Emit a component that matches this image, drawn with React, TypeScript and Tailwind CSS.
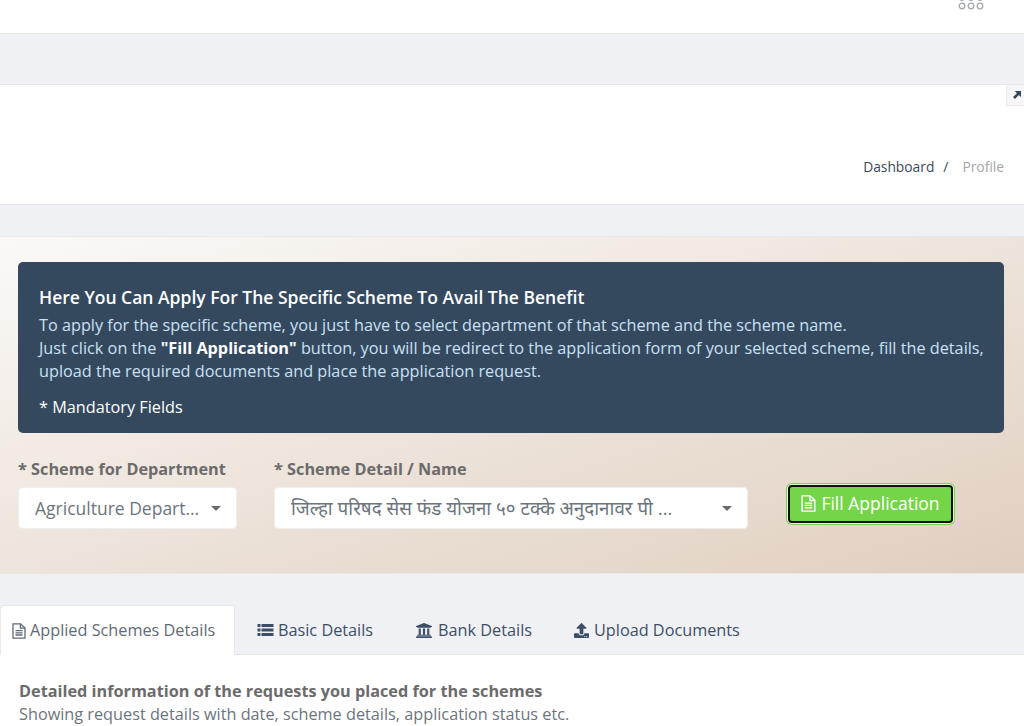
import { FaUniversity, FaUpload } from 'react-icons/fa';

function FileIcon({ className }: { className: string }) {
  return (
    <svg className={className} viewBox="0 0 14 16" fill="none" stroke="currentColor" strokeWidth="1.3">
      <path d="M1 .8h7.6L13 5v10.2H1z" />
      <path d="M8.4 1v4.2H13" />
      <path d="M3.5 7.6h7M3.5 9.8h7M3.5 12h7" />
    </svg>
  );
}

function ListIcon({ className }: { className: string }) {
  return (
    <svg className={className} viewBox="0 0 16 14" fill="currentColor">
      <path d="M0 1h3v3H0zM4 1h12v3H4zM0 5.5h3v3H0zM4 5.5h12v3H4zM0 10h3v3H0zM4 10h12v3H4z" />
    </svg>
  );
}

function Caret() {
  return <span className="h-0 w-0 shrink-0 border-x-[5px] border-t-[5px] border-x-transparent border-t-[#6b6b6b]" />;
}

function Select({ text, className, textClass }: { text: string; className: string; textClass: string }) {
  return (
    <div className={`flex h-[42px] items-center justify-between rounded border border-[#eeeeee] bg-white pl-4 pr-[15px] text-[#6c757d] ${className}`}>
      <span className={`truncate ${textClass}`}>{text}</span>
      <Caret />
    </div>
  );
}

export default function App() {
  return (
    <div
      className="h-[726px] overflow-hidden bg-[#f0f1f5] text-[16.25px] text-[#6c757d]"
      style={{ fontFamily: '"Open Sans", "Noto Sans", sans-serif' }}
    >
      <header className="flex h-[34px] justify-end border-b border-[#e8e8e8] bg-white pr-[40px]">
        <svg width="26" height="12" viewBox="0 0 26 12" fill="none" stroke="#a3a7ad" strokeWidth="1.3">
          <circle cx="4" cy="6" r="2.8" />
          <circle cx="13" cy="6" r="2.8" />
          <circle cx="22" cy="6" r="2.8" />
          <circle cx="4" cy="-2.5" r="2.8" />
          <circle cx="13" cy="-2.5" r="2.8" />
          <circle cx="22" cy="-2.5" r="2.8" />
        </svg>
      </header>

      <div className="h-[50px]" />

      <section className="relative flex h-[121px] items-end justify-end border-y border-[#e8e8e8] bg-white pb-[26px] pr-[20px] text-[13.8px]">
        <span className="text-[#3c4a5a]">Dashboard</span>
        <span className="ml-[9px] mr-[10px] text-[#3c4a5a]">/</span>
        <span className="ml-[4px] text-[#a3a6a9]">Profile</span>
        <div className="absolute right-0 top-0 flex h-[21px] w-[18px] items-center justify-center border-b border-l border-[#e8e8e8] bg-[#f6f6f8] pl-[2px]">
          <svg width="8" height="8" viewBox="0 0 9 9" fill="#34495e">
            <path d="M2 0h7v7L6.6 4.6 2.2 9 0 6.8l4.4-4.4z" />
          </svg>
        </div>
      </section>

      <div className="h-[31px]" />

      <section className="h-[338px] border-y border-[#e8e8e8] bg-gradient-to-br from-[#fbf9f7] to-[#e0cfc0] pl-[18px] pr-[20px] pt-[25px]">
        <div className="h-[171px] rounded-[5px] bg-[#34495e] pl-[21px] pr-4 pt-[21px] text-[#c9e0f5]">
          <h2 className="mb-px text-[17.5px] leading-[29px] font-semibold text-white">
            Here You Can Apply For The Specific Scheme To Avail The Benefit
          </h2>
          <p className="mt-[2px] leading-[23px]">
            To apply for the specific scheme, you just have to select department of that scheme and the scheme name.
            <br />
            Just click on the <b className="text-white">"Fill Application"</b> button, you will be redirect to the application form of your selected scheme, fill the details,
            <br />
            upload the required documents and place the application request.
          </p>
          <p className="mt-[12px] leading-[24px] text-white">* Mandatory Fields</p>
        </div>

        <div className="mt-[24px] flex items-end">
          <div className="w-[219px]">
            <label className="block font-bold leading-[24px] text-[#6b6b6b]">* Scheme for Department</label>
            <Select text="Agriculture Department" textClass="text-[17.5px]" className="mt-[6px] w-[219px]" />
          </div>
          <div className="ml-[37px] w-[474px]">
            <label className="block font-bold leading-[24px] text-[#6b6b6b]">* Scheme Detail / Name</label>
            <Select
              text="जिल्हा परिषद सेस फंड योजना ५० टक्के अनुदानावर पी व्ही सी पाईप पुरवठा करणे"
              textClass="w-[384px] text-[18.8px]"
              className="mt-[6px] w-[474px]"
            />
          </div>
          <button className="mb-[6px] ml-[40px] flex h-[38px] w-[165px] items-center justify-center gap-[5px] rounded-[4px] border-2 border-[#111111] bg-[#75d548] pb-[2px] text-[17.5px] text-white shadow-[0_0_0_1px_#e8f5e0,0_0_0_2px_#75d548]">
            <FileIcon className="h-[17px] w-[15px]" />
            Fill Application
          </button>
        </div>
      </section>

      <nav className="mt-[31px] flex h-[50px] border-b border-[#e4e4e4] text-[#3d4f66]">
        <a className="-mb-px flex w-[235px] items-center rounded-t border-x border-t border-[#e8e8e8] bg-white pl-[11px] text-[#5f6b76]">
          <FileIcon className="mr-[4px] h-[16px] w-[14px]" />
          Applied Schemes Details
        </a>
        <a className="ml-[22px] flex items-center pt-px">
          <ListIcon className="mr-[4px] h-[14px] w-[17px]" />
          Basic Details
        </a>
        <a className="ml-[42px] flex items-center pt-px">
          <FaUniversity className="mr-[5px] h-[17px] w-[18px]" />
          Bank Details
        </a>
        <a className="ml-[42px] flex items-center pt-px">
          <FaUpload className="mr-[5px] h-[15px] w-[15px]" />
          Upload Documents
        </a>
      </nav>

      <section className="h-[100px] bg-white pl-[19px] pt-[25px] leading-[23px]">
        <p className="font-bold text-[#6b6b6b]">Detailed information of the requests you placed for the schemes</p>
        <p className="text-[#6c757d]">Showing request details with date, scheme details, application status etc.</p>
      </section>
    </div>
  );
}
